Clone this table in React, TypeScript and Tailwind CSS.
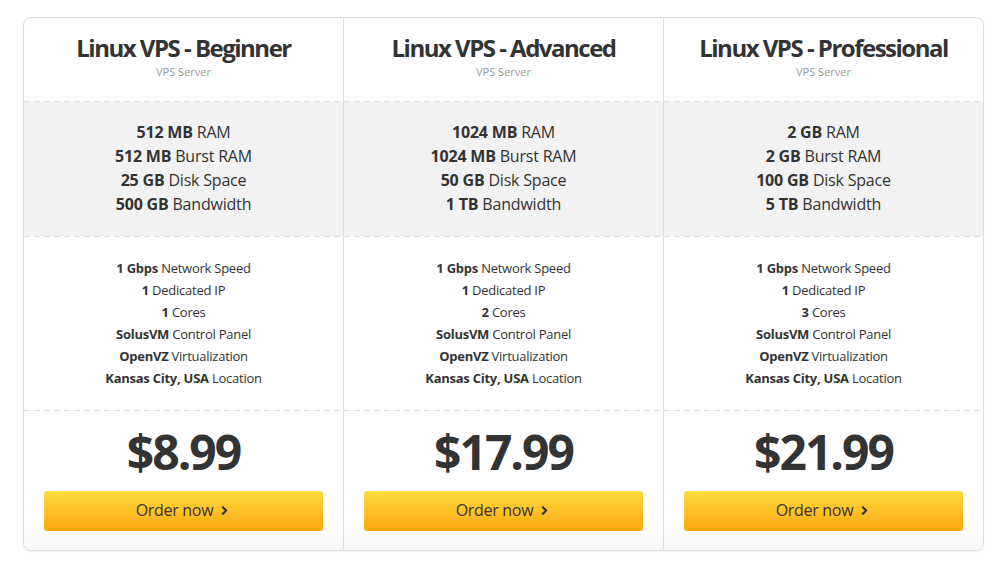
import { ChevronRight } from "lucide-react";

type Plan = {
  name: string;
  specs: [string, string][];
  features: [string, string][];
  price: string;
};

const plans: Plan[] = [
  {
    name: "Linux VPS - Beginner",
    specs: [
      ["512 MB", "RAM"],
      ["512 MB", "Burst RAM"],
      ["25 GB", "Disk Space"],
      ["500 GB", "Bandwidth"],
    ],
    features: [
      ["1 Gbps", "Network Speed"],
      ["1", "Dedicated IP"],
      ["1", "Cores"],
      ["SolusVM", "Control Panel"],
      ["OpenVZ", "Virtualization"],
      ["Kansas City, USA", "Location"],
    ],
    price: "$8.99",
  },
  {
    name: "Linux VPS - Advanced",
    specs: [
      ["1024 MB", "RAM"],
      ["1024 MB", "Burst RAM"],
      ["50 GB", "Disk Space"],
      ["1 TB", "Bandwidth"],
    ],
    features: [
      ["1 Gbps", "Network Speed"],
      ["1", "Dedicated IP"],
      ["2", "Cores"],
      ["SolusVM", "Control Panel"],
      ["OpenVZ", "Virtualization"],
      ["Kansas City, USA", "Location"],
    ],
    price: "$17.99",
  },
  {
    name: "Linux VPS - Professional",
    specs: [
      ["2 GB", "RAM"],
      ["2 GB", "Burst RAM"],
      ["100 GB", "Disk Space"],
      ["5 TB", "Bandwidth"],
    ],
    features: [
      ["1 Gbps", "Network Speed"],
      ["1", "Dedicated IP"],
      ["3", "Cores"],
      ["SolusVM", "Control Panel"],
      ["OpenVZ", "Virtualization"],
      ["Kansas City, USA", "Location"],
    ],
    price: "$21.99",
  },
];

function Dashed() {
  return (
    <div className="h-px w-full bg-[linear-gradient(to_right,#dddddd_60%,transparent_60%)] bg-[length:10px_1px] bg-repeat-x" />
  );
}

function Column({ plan, first }: { plan: Plan; first: boolean }) {
  return (
    <div className={first ? "flex flex-col" : "flex flex-col border-l border-[#dddddd]"}>
      {/* Header */}
      <div className="pt-[14px] pb-[21px] text-center">
        <h2 className="text-[24px] leading-[32px] font-bold tracking-[-1.5px] text-[#333]">
          {plan.name}
        </h2>
        <p className="text-[11px] leading-[16px] text-[#999]">VPS Server</p>
      </div>
      <Dashed />

      {/* Specs */}
      <div className="bg-[#f2f2f2] pt-[18px] pb-[20px] text-center text-[16px] leading-[24px] tracking-[-0.2px] text-[#333]">
        {plan.specs.map(([b, t]) => (
          <div key={t}>
            <span className="font-bold">{b}</span> {t}
          </div>
        ))}
      </div>
      <Dashed />

      {/* Features */}
      <div className="pt-[20px] pb-[21px] text-center text-[13px] leading-[22px] tracking-[-0.25px] text-[#333]">
        {plan.features.map(([b, t]) => (
          <div key={t}>
            <span className="font-bold">{b}</span> {t}
          </div>
        ))}
      </div>
      <Dashed />

      {/* Price */}
      <div className="flex flex-col items-center px-5 pt-[13px] pb-[19px] bg-[linear-gradient(to_bottom,#ffffff_80%,#f7f7f7)]">
        <div className="text-[48px] leading-[56px] font-bold tracking-[-2px] text-[#333]">
          {plan.price}
        </div>
        <button className="mt-[11px] flex h-[40px] w-full items-center justify-center gap-[5px] rounded-[3px] bg-[linear-gradient(to_bottom,#ffdc40,#ffa60f)] pb-[2px] text-[16px] tracking-[-0.3px] text-[#333]">
          Order now
          <ChevronRight size={13} strokeWidth={4} className="mt-px" />
        </button>
      </div>
    </div>
  );
}

export default function App() {
  return (
    <div className="min-h-[566px] bg-white pl-[23px] pt-[17px] font-['Open_Sans',sans-serif]">
      <div className="grid w-[961px] grid-cols-[319px_320px_320px] overflow-hidden rounded-[8px] border border-[#dddddd] shadow-[0_1px_2px_rgba(0,0,0,0.06)]">
        {plans.map((p, i) => (
          <Column key={p.name} plan={p} first={i === 0} />
        ))}
      </div>
    </div>
  );
}
